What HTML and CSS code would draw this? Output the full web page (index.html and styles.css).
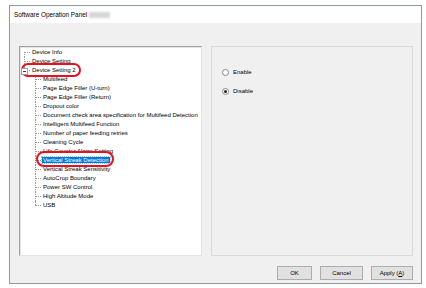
FILE: index.html
```html
<!DOCTYPE html>
<html lang="en">

<head>
    <meta charset="UTF-8">
    <title>Software Operation Panel</title>
    <link rel="stylesheet" href="styles.css">
</head>

<body>
    <div class="window">
        <div class="titlebar">
            <span class="title">Software Operation Panel</span>
            <span class="blur"></span>
        </div>
        <div class="content">
            <div class="panes">
                <div class="treebox">
                    <ul class="tree">
                        <li><span class="label">Device Info</span></li>
                        <li><span class="label">Device Setting</span></li>
                        <li class="last">
                            <span class="toggle"></span>
                            <span class="label">Device Setting 2</span>
                            <ul class="sub">
                                <li><span class="label">Multifeed</span></li>
                                <li><span class="label">Page Edge Filler (U-turn)</span></li>
                                <li><span class="label">Page Edge Filler (Return)</span></li>
                                <li><span class="label">Dropout color</span></li>
                                <li><span class="label">Document check area specification for Multifeed Detection</span></li>
                                <li><span class="label">Intelligent Multifeed Function</span></li>
                                <li><span class="label">Number of paper feeding retries</span></li>
                                <li><span class="label">Cleaning Cycle</span></li>
                                <li><span class="label">Life Counter Alarm Setting</span></li>
                                <li><span class="label selected">Vertical Streak Detection</span></li>
                                <li><span class="label">Vertical Streak Sensitivity</span></li>
                                <li><span class="label">AutoCrop Boundary</span></li>
                                <li><span class="label">Power SW Control</span></li>
                                <li><span class="label">High Altitude Mode</span></li>
                                <li class="last"><span class="label">USB</span></li>
                            </ul>
                        </li>
                    </ul>
                    <div class="mark mark-one"></div>
                    <div class="mark mark-two"></div>
                </div>
                <div class="group">
                    <label class="option"><span class="radio"></span>Enable</label>
                    <label class="option"><span class="radio checked"></span>Disable</label>
                </div>
            </div>
            <div class="buttons">
                <button class="btn btn-ok">OK</button>
                <button class="btn btn-cancel">Cancel</button>
                <button class="btn btn-apply">Apply (<u>A</u>)</button>
            </div>
        </div>
    </div>
</body>

</html>
```

FILE: styles.css
```css
body {
    margin: 0;
    background: #fff;
    font-family: "Liberation Sans", Arial, sans-serif;
    font-size: 6px;
    color: #000;
}

.window {
    margin: 5px 0 0 9px;
    width: 411px;
    height: 277px;
    border: 1px solid #8c99a6;
    background: #f0f0f0;
    display: flex;
    flex-direction: column;
}

.titlebar {
    height: 17px;
    background: #fff;
    display: flex;
    align-items: center;
    padding-left: 4px;
    font-size: 6.4px;
}

.blur {
    width: 21px;
    height: 6px;
    margin-left: 2px;
    background: #d6d6d6;
    filter: blur(1px);
}

.content {
    flex: 1;
    padding: 23px 8px 0 9px;
}

.panes {
    display: flex;
    gap: 9px;
    height: 210px;
}

.treebox {
    position: relative;
    width: 181px;
    background: #fff;
    border: 1px solid #a0a0a0;
    border-right-color: #e3e3e3;
    border-bottom-color: #e3e3e3;
    box-shadow: inset 1px 1px 0 #e3e3e3;
}

.tree,
.tree ul {
    list-style: none;
    margin: 0;
    padding: 0;
}

.tree {
    padding-top: 1px;
}

.tree li {
    position: relative;
    padding-left: 11px;
    line-height: 9px;
}

.tree li::before {
    content: "";
    position: absolute;
    left: 4px;
    top: 4px;
    width: 6px;
    border-top: 1px dotted #9a9a9a;
}

.tree li::after {
    content: "";
    position: absolute;
    left: 4px;
    top: 0;
    bottom: 0;
    border-left: 1px dotted #9a9a9a;
}

.tree li.last::after {
    bottom: auto;
    height: 4px;
}

.tree > li:first-child::after {
    top: 4px;
}

.label {
    padding: 0 1px;
    white-space: nowrap;
}

.label.selected {
    background: #0078d7;
    color: #fff;
    outline: 1px dotted #99c9ef;
}

.toggle {
    position: absolute;
    left: 1px;
    top: 2px;
    width: 5px;
    height: 5px;
    border: 1px solid #a0a0a0;
    background: #fff;
    z-index: 1;
}

.toggle::after {
    content: "";
    position: absolute;
    left: 1px;
    top: 2px;
    width: 3px;
    border-top: 1px solid #333;
}

.mark {
    position: absolute;
    border: 2px solid #e8101f;
    border-radius: 8px;
}

.mark-one {
    left: 1px;
    top: 16px;
    width: 56px;
    height: 10px;
}

.mark-two {
    left: 16px;
    top: 104px;
    width: 74px;
    height: 12px;
}

.group {
    flex: 1;
    border: 1px solid #dadada;
    padding: 21px 0 0 10px;
    display: flex;
    flex-direction: column;
    gap: 10px;
}

.option {
    display: flex;
    align-items: center;
    gap: 4px;
    line-height: 9px;
}

.radio {
    position: relative;
    width: 5px;
    height: 5px;
    border: 1px solid #8a8a8a;
    border-radius: 50%;
    background: #fff;
}

.radio.checked::after {
    content: "";
    position: absolute;
    left: 1px;
    top: 1px;
    width: 3px;
    height: 3px;
    border-radius: 50%;
    background: #222;
}

.buttons {
    display: flex;
    justify-content: flex-end;
    gap: 8px;
    margin-top: 10px;
}

.btn {
    height: 14px;
    padding: 0;
    font-family: inherit;
    font-size: 6px;
    background: #e1e1e1;
    border: 1px solid #adadad;
    color: #000;
}

.btn-ok {
    width: 35px;
}

.btn-cancel {
    width: 43px;
}

.btn-apply {
    width: 42px;
}
```
